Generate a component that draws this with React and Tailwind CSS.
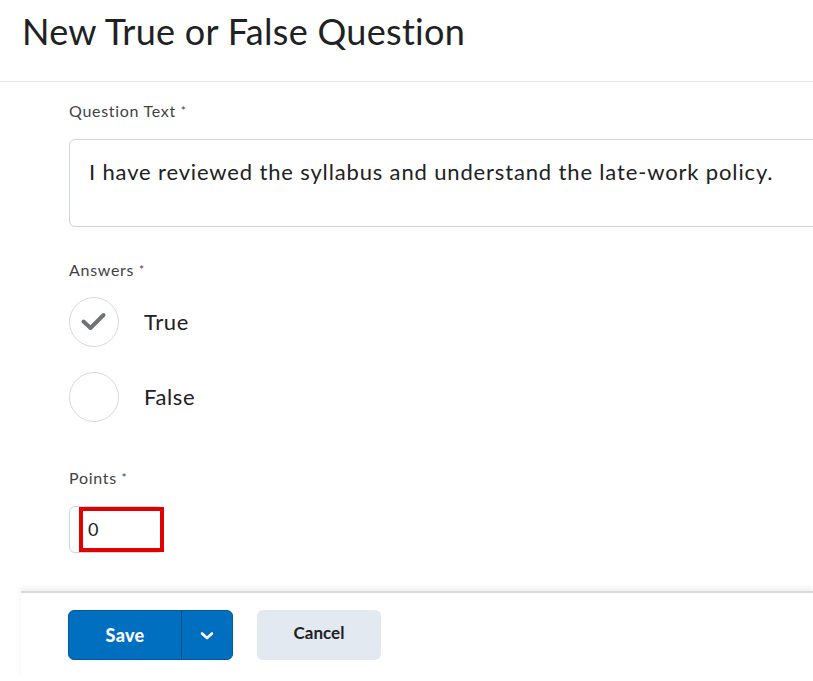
import React from "react";

export default function App() {
  return (
    <div className="w-[813px] h-[681px] overflow-hidden bg-white text-[#202122] flex flex-col" style={{ fontFamily: "Lato, 'Noto Sans', sans-serif" }}>
      <header className="h-[82px] shrink-0 border-b border-[#e3e6ea] pl-[22px] pt-[9px]">
        <h1 className="text-[36px] leading-[44px] font-normal tracking-[0.3px] text-[#202122]">New True or False Question</h1>
      </header>
      <div className="h-[22px] shrink-0" />
      <main className="h-[487px] shrink-0 overflow-hidden pl-[69px]">
        <div className="-mt-[3px] text-[16px] leading-[20px] tracking-[0.7px] text-[#3f4244]">Question Text <span className="text-[12px] align-top">*</span></div>
        <div className="mt-[18px] w-[800px] h-[88px] border border-[#cdd5dc] rounded-[6px] pl-[19px] pt-[18px] text-[22px] leading-[28px] tracking-[0.85px] text-[#202122]">
          I have reviewed the syllabus and understand the late-work policy.
        </div>
        <div className="mt-[33px] text-[16px] leading-[20px] tracking-[0.7px] text-[#3f4244]">Answers <span className="text-[12px] align-top">*</span></div>
        <div className="mt-[17px] flex flex-col gap-[25px]">
          <div className="flex items-center gap-[25px]">
            <div className="w-[50px] h-[50px] rounded-full border border-[#d3d9e3] flex items-center justify-center">
              <svg width="26" height="20" viewBox="0 0 26 20" fill="none">
                <path d="M2.5 9.5 L9.5 16 L22.5 3" stroke="#6e7376" strokeWidth="4" strokeLinecap="round" strokeLinejoin="round" />
              </svg>
            </div>
            <span className="text-[22px] leading-[28px] tracking-[0.6px] text-[#202122]">True</span>
          </div>
          <div className="flex items-center gap-[25px]">
            <div className="w-[50px] h-[50px] rounded-full border border-[#d3d9e3]" />
            <span className="text-[22px] leading-[28px] tracking-[0.6px] text-[#202122]">False</span>
          </div>
        </div>
        <div className="mt-[46px] text-[16px] leading-[20px] tracking-[0.7px] text-[#3f4244]">Points <span className="text-[12px] align-top">*</span></div>
        <div className="relative mt-[18px] w-[94px] h-[47px] border border-[#cdd5dc] rounded-[6px] flex items-center pl-[18px] text-[18px] text-[#202122]">
          0
          <div className="absolute left-[9px] top-[0px] w-[85px] h-[45px] border-[4px] border-[#e00000]" />
        </div>
      </main>
      <footer className="ml-[21px] flex-1 border-t-2 border-[#d3d9de] shadow-[0_-4px_5px_rgba(0,0,0,0.06)] pl-[47px] pt-[17px] flex gap-[24px]">
        <div className="flex h-[50px] w-[165px] rounded-[6px] bg-[#006fbf] border border-[#005a9c] overflow-hidden">
          <button className="w-[113px] text-white font-black text-[18px] tracking-[0.3px] border-r border-[#004e86]">Save</button>
          <button className="flex-1 flex items-center justify-center pt-[2px]">
            <svg width="14" height="10" viewBox="0 0 14 10" fill="none">
              <path d="M2 2.5 L7 7 L12 2.5" stroke="white" strokeWidth="2.6" strokeLinecap="round" strokeLinejoin="round" />
            </svg>
          </button>
        </div>
        <button className="h-[50px] w-[124px] rounded-[6px] bg-[#e3e9f1] text-[#202122] font-bold text-[17px] leading-[46px] pb-[4px]">Cancel</button>
      </footer>
    </div>
  );
}
